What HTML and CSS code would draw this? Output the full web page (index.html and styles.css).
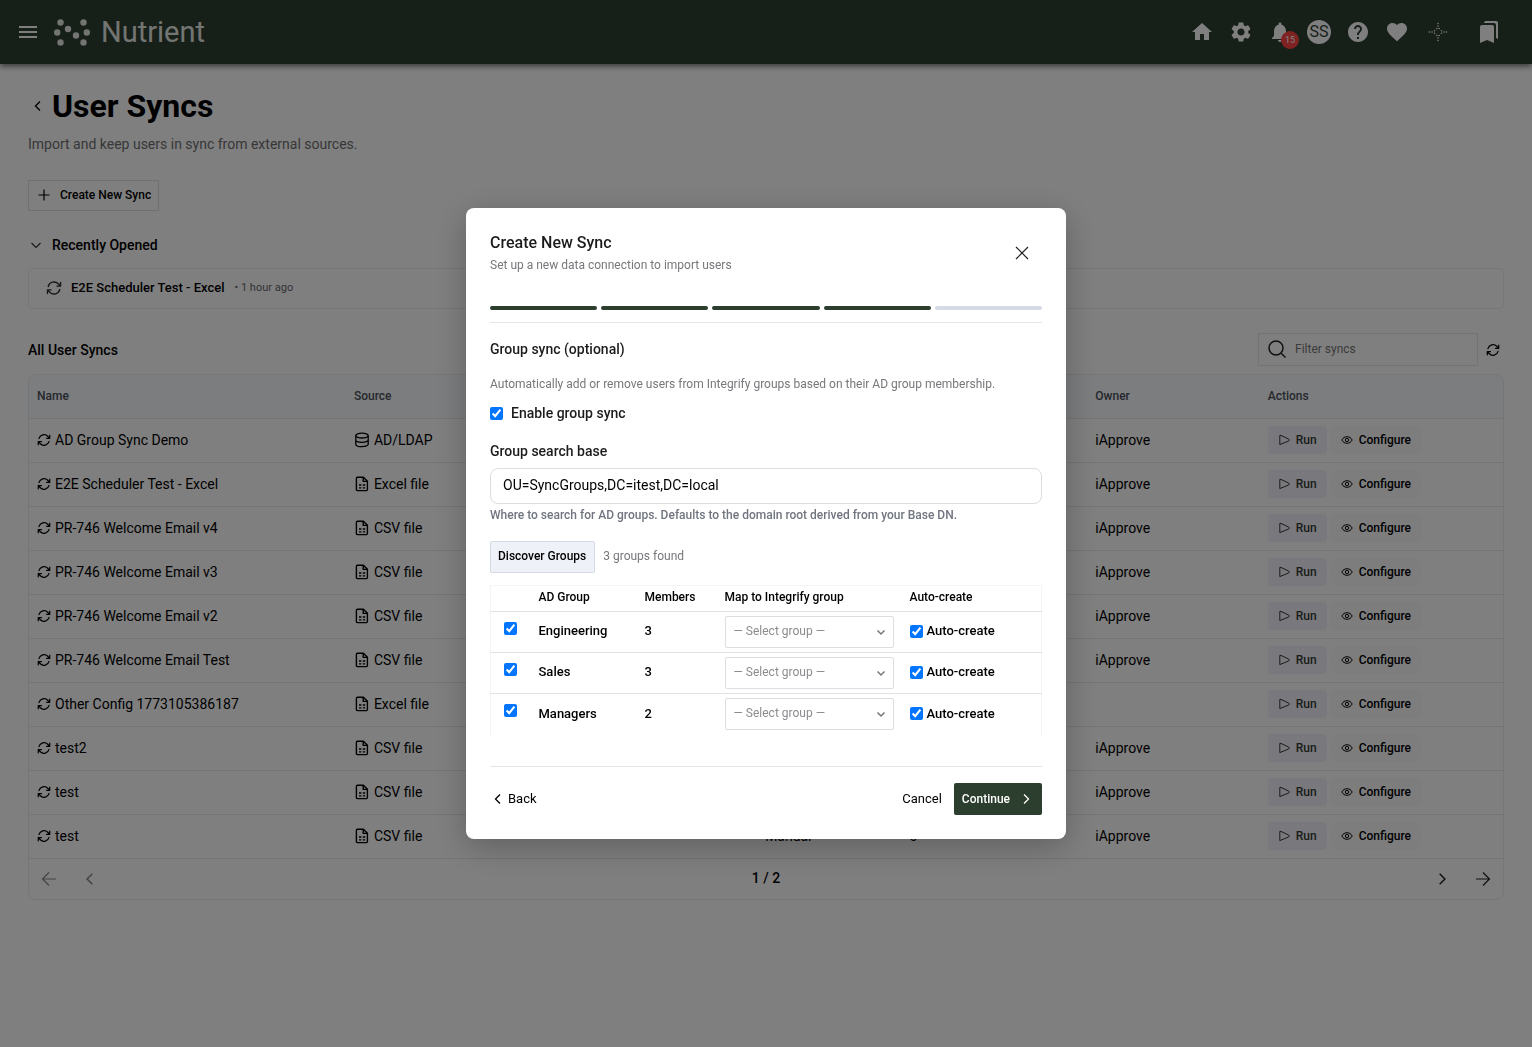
FILE: index.html
```html
<!DOCTYPE html>
<html lang="en">
<head>
<meta charset="utf-8">
<title>User Syncs</title>
<link rel="stylesheet" href="styles.css">
</head>
<body>
<svg class="sprite" aria-hidden="true">
  <symbol id="i-sync" viewBox="1 1 22 22"><path d="M16.023 9.348h4.992v-.001M2.985 19.644v-4.992m0 0h4.992m-4.993 0 3.181 3.183a8.250 8.250 0 0 0 13.803-3.700M4.031 9.865a8.250 8.250 0 0 1 13.803-3.700l3.181 3.182m0-4.991v4.990" fill="none" stroke="currentColor" stroke-width="1.900" stroke-linecap="round" stroke-linejoin="round"/></symbol>
  <symbol id="i-file" viewBox="0 0 16 16"><g fill="none" stroke="currentColor" stroke-width="1.4" stroke-linejoin="round"><path d="M3.4 1.2h6l4 4v8.4a1 1 0 0 1-1 1h-9a1 1 0 0 1-1-1V2.2a1 1 0 0 1 1-1z"/><path d="M9.2 1.4v4h4"/><path d="M5 9h2.4M8.8 9h2.4M5 11.8h2.4M8.8 11.8h2.4" stroke-width="1.3"/></g></symbol>
  <symbol id="i-db" viewBox="0 0 16 16"><g fill="none" stroke="currentColor" stroke-width="1.3"><ellipse cx="8" cy="3.600" rx="6.200" ry="2.400"/><path d="M1.800 3.600v8.600c0 1.400 2.800 2.500 6.200 2.500s6.200-1.100 6.200-2.500V3.600M1.800 8c0 1.400 2.800 2.300 6.200 2.300s6.200-.9 6.200-2.300"/></g></symbol>
  <symbol id="i-play" viewBox="0 0 12 12"><path d="M1.8 1.4v9.2L10.6 7a1 1 0 0 0 0-1.9L3 1.4z" fill="none" stroke="currentColor" stroke-linejoin="round"/></symbol>
  <symbol id="i-eye" viewBox="0 0 12 12"><g fill="none" stroke="currentColor" stroke-width="1"><path d="M.8 6C2 3.8 3.800 2.700 6 2.700S10 3.800 11.200 6C10 8.200 8.200 9.300 6 9.300S2 8.200.8 6z"/><circle cx="6" cy="6" r="1.700"/></g></symbol>
  <symbol id="i-left" viewBox="0 0 12 12"><path d="M8 1.500 3.500 6 8 10.500" fill="none" stroke="currentColor" stroke-width="1.300"/></symbol>
  <symbol id="i-right" viewBox="0 0 12 12"><path d="M4 1.500 8.500 6 4 10.500" fill="none" stroke="currentColor" stroke-width="1.300"/></symbol>
  <symbol id="i-down" viewBox="0 0 12 12"><path d="M1.500 4 6 8.500 10.500 4" fill="none" stroke="currentColor" stroke-width="1.200"/></symbol>
  <symbol id="i-caret" viewBox="0 0 12 12"><path d="M2.500 4.500 6 8l3.500-3.500" fill="none" stroke="currentColor" stroke-width="1.500"/></symbol>
</svg>

<header class="topbar">
  <button class="icon-btn" aria-label="Menu"><svg width="18" height="12" viewBox="0 0 18 12"><path d="M0 0h18v2H0zM0 5h18v2H0zM0 10h18v2H0z" fill="currentColor"/></svg></button>
  <a class="brand" href="#">
    <svg width="36" height="27" viewBox="0 0 36 27" aria-hidden="true"><g fill="currentColor"><circle cx="6.500" cy="3.500" r="3.200"/><circle cx="29.500" cy="3.500" r="3.200"/><circle cx="14" cy="10" r="3.200"/><circle cx="3.200" cy="13.500" r="3.200"/><circle cx="32.800" cy="13.500" r="3.200"/><circle cx="22" cy="16.500" r="3.200"/><circle cx="6.500" cy="23.500" r="3.200"/><circle cx="29.500" cy="23.500" r="3.200"/></g></svg>
    <span>Nutrient</span>
  </a>
  <nav class="tools">
    <button class="icon-btn" aria-label="Home"><svg width="24" height="24" viewBox="0 0 24 24"><path fill="currentColor" d="M10 20v-6h4v6h5v-8h3L12 3 2 12h3v8z"/></svg></button>
    <button class="icon-btn" aria-label="Settings"><svg width="24" height="24" viewBox="0 0 24 24"><path fill="currentColor" d="M19.140 12.940c.04-.3.06-.61.06-.94 0-.32-.02-.64-.07-.94l2.030-1.580c.18-.14.23-.41.12-.61l-1.920-3.320c-.12-.22-.37-.29-.59-.22l-2.390.96c-.5-.38-1.030-.7-1.620-.94l-.36-2.540c-.04-.24-.24-.41-.48-.41h-3.840c-.24 0-.43.17-.47.41l-.36 2.540c-.59.24-1.130.57-1.620.94l-2.390-.96c-.22-.08-.47 0-.59.22L2.740 8.870c-.12.21-.08.47.12.61l2.030 1.580c-.05.3-.09.63-.09.94s.02.64.07.94l-2.030 1.580c-.18.14-.23.41-.12.61l1.920 3.320c.12.22.37.29.59.22l2.390-.96c.5.38 1.030.7 1.620.94l.36 2.540c.05.24.24.41.48.41h3.840c.24 0 .44-.17.47-.41l.36-2.540c.59-.24 1.130-.56 1.620-.94l2.390.96c.22.08.47 0 .59-.22l1.920-3.320c.12-.22.07-.47-.12-.61zM12 15.600c-1.980 0-3.600-1.620-3.600-3.600s1.620-3.600 3.600-3.600 3.600 1.620 3.600 3.600-1.620 3.600-3.600 3.600"/></svg></button>
    <button class="icon-btn bell" aria-label="Notifications"><svg width="24" height="24" viewBox="0 0 24 24"><path fill="currentColor" d="M12 22c1.100 0 2-.9 2-2h-4c0 1.100.89 2 2 2m6-6v-5c0-3.070-1.640-5.640-4.500-6.320V4c0-.83-.67-1.500-1.500-1.500s-1.500.67-1.500 1.500v.68C7.630 5.360 6 7.920 6 11v5l-2 2v1h16v-1z"/></svg><span class="badge">15</span></button>
    <button class="avatar" aria-label="Account">SS</button>
    <button class="icon-btn" aria-label="Help"><svg width="24" height="24" viewBox="0 0 24 24"><path fill="currentColor" d="M12 2C6.480 2 2 6.480 2 12s4.480 10 10 10 10-4.480 10-10S17.520 2 12 2m1 17h-2v-2h2zm2.070-7.750-.9.920C13.450 12.900 13 13.500 13 15h-2v-.5c0-1.100.45-2.100 1.170-2.830l1.240-1.260c.37-.36.59-.86.59-1.410 0-1.100-.9-2-2-2s-2 .9-2 2H8c0-2.210 1.790-4 4-4s4 1.790 4 4c0 .88-.36 1.680-.93 2.250"/></svg></button>
    <button class="icon-btn" aria-label="Favorites"><svg width="24" height="24" viewBox="0 0 24 24"><path fill="currentColor" d="m12 21.350-1.450-1.320C5.400 15.360 2 12.280 2 8.500 2 5.420 4.420 3 7.500 3c1.740 0 3.410.81 4.500 2.090C13.090 3.810 14.760 3 16.500 3 19.580 3 22 5.420 22 8.500c0 3.780-3.400 6.860-8.550 11.540z"/></svg></button>
    <button class="icon-btn sparkle" aria-label="Assistant"><svg width="20" height="20" viewBox="0 0 20 20"><g fill="none" stroke="currentColor" stroke-width="1.600" stroke-linecap="round"><path d="M10 1.500h.01M10 4h.01M10 16h.01M10 18.500h.01M1.500 10h.01M4 10h.01M16 10h.01M18.500 10h.01"/><path d="M8.800 6.500h.01M11.200 6.500h.01M8.800 13.500h.01M11.200 13.500h.01M6.500 8.800h.01M6.500 11.200h.01M13.500 8.800h.01M13.500 11.200h.01"/></g></svg></button>
    <button class="icon-btn shelf" aria-label="Bookmarks"><svg width="24" height="24" viewBox="0 0 24 24"><path fill="currentColor" d="m19 18 2 1V3c0-1.100-.9-2-2-2H8.990C7.890 1 7 1.900 7 3h10c1.100 0 2 .9 2 2zM15 5H5c-1.100 0-2 .9-2 2v16l7-3 7 3V7c0-1.100-.9-2-2-2"/></svg></button>
  </nav>
</header>

<main class="page">
  <div class="heading">
    <a href="#" aria-label="Back"><svg class="s12"><use href="#i-left"/></svg></a>
    <h1>User Syncs</h1>
  </div>
  <p class="lead">Import and keep users in sync from external sources.</p>
  <button class="create"><svg width="12" height="12" viewBox="0 0 12 12"><path d="M6 .5v11M.5 6h11" stroke="currentColor" stroke-width="1.200"/></svg>Create New Sync</button>

  <h2 class="recent-title"><svg class="s12"><use href="#i-down"/></svg>Recently Opened</h2>
  <a class="recent" href="#"><svg class="s16"><use href="#i-sync"/></svg><strong>E2E Scheduler Test - Excel</strong><span>• 1 hour ago</span></a>

  <div class="toolbar">
    <h2>All User Syncs</h2>
    <label class="filter"><svg width="20" height="20" viewBox="0 0 20 20"><g fill="none" stroke="currentColor" stroke-width="1.500"><circle cx="9" cy="9" r="7"/><path d="m14 14 4.500 4.500"/></g></svg><input type="text" placeholder="Filter syncs" aria-label="Filter syncs"></label>
    <button class="icon-btn" aria-label="Refresh"><svg class="s14"><use href="#i-sync"/></svg></button>
  </div>

  <div class="panel">
    <table class="syncs">
      <colgroup><col class="c-name"><col class="c-source"><col class="c-mode"><col class="c-count"><col class="c-owner"><col></colgroup>
      <thead><tr><th>Name</th><th>Source</th><th></th><th></th><th>Owner</th><th>Actions</th></tr></thead>
      <tbody>
        <tr><td><span class="cell"><svg class="s14"><use href="#i-sync"/></svg>AD Group Sync Demo</span></td><td><span class="cell"><svg class="s16"><use href="#i-db"/></svg>AD/LDAP</span></td><td></td><td></td><td>iApprove</td><td><span class="acts"><button class="run"><svg class="s12"><use href="#i-play"/></svg>Run</button><button class="conf"><svg class="s12"><use href="#i-eye"/></svg>Configure</button></span></td></tr>
        <tr><td><span class="cell"><svg class="s14"><use href="#i-sync"/></svg>E2E Scheduler Test - Excel</span></td><td><span class="cell"><svg class="s16"><use href="#i-file"/></svg>Excel file</span></td><td></td><td></td><td>iApprove</td><td><span class="acts"><button class="run"><svg class="s12"><use href="#i-play"/></svg>Run</button><button class="conf"><svg class="s12"><use href="#i-eye"/></svg>Configure</button></span></td></tr>
        <tr><td><span class="cell"><svg class="s14"><use href="#i-sync"/></svg>PR-746 Welcome Email v4</span></td><td><span class="cell"><svg class="s16"><use href="#i-file"/></svg>CSV file</span></td><td></td><td></td><td>iApprove</td><td><span class="acts"><button class="run"><svg class="s12"><use href="#i-play"/></svg>Run</button><button class="conf"><svg class="s12"><use href="#i-eye"/></svg>Configure</button></span></td></tr>
        <tr><td><span class="cell"><svg class="s14"><use href="#i-sync"/></svg>PR-746 Welcome Email v3</span></td><td><span class="cell"><svg class="s16"><use href="#i-file"/></svg>CSV file</span></td><td></td><td></td><td>iApprove</td><td><span class="acts"><button class="run"><svg class="s12"><use href="#i-play"/></svg>Run</button><button class="conf"><svg class="s12"><use href="#i-eye"/></svg>Configure</button></span></td></tr>
        <tr><td><span class="cell"><svg class="s14"><use href="#i-sync"/></svg>PR-746 Welcome Email v2</span></td><td><span class="cell"><svg class="s16"><use href="#i-file"/></svg>CSV file</span></td><td></td><td></td><td>iApprove</td><td><span class="acts"><button class="run"><svg class="s12"><use href="#i-play"/></svg>Run</button><button class="conf"><svg class="s12"><use href="#i-eye"/></svg>Configure</button></span></td></tr>
        <tr><td><span class="cell"><svg class="s14"><use href="#i-sync"/></svg>PR-746 Welcome Email Test</span></td><td><span class="cell"><svg class="s16"><use href="#i-file"/></svg>CSV file</span></td><td></td><td></td><td>iApprove</td><td><span class="acts"><button class="run"><svg class="s12"><use href="#i-play"/></svg>Run</button><button class="conf"><svg class="s12"><use href="#i-eye"/></svg>Configure</button></span></td></tr>
        <tr><td><span class="cell"><svg class="s14"><use href="#i-sync"/></svg>Other Config 1773105386187</span></td><td><span class="cell"><svg class="s16"><use href="#i-file"/></svg>Excel file</span></td><td></td><td></td><td></td><td><span class="acts"><button class="run"><svg class="s12"><use href="#i-play"/></svg>Run</button><button class="conf"><svg class="s12"><use href="#i-eye"/></svg>Configure</button></span></td></tr>
        <tr><td><span class="cell"><svg class="s14"><use href="#i-sync"/></svg>test2</span></td><td><span class="cell"><svg class="s16"><use href="#i-file"/></svg>CSV file</span></td><td></td><td></td><td>iApprove</td><td><span class="acts"><button class="run"><svg class="s12"><use href="#i-play"/></svg>Run</button><button class="conf"><svg class="s12"><use href="#i-eye"/></svg>Configure</button></span></td></tr>
        <tr><td><span class="cell"><svg class="s14"><use href="#i-sync"/></svg>test</span></td><td><span class="cell"><svg class="s16"><use href="#i-file"/></svg>CSV file</span></td><td></td><td></td><td>iApprove</td><td><span class="acts"><button class="run"><svg class="s12"><use href="#i-play"/></svg>Run</button><button class="conf"><svg class="s12"><use href="#i-eye"/></svg>Configure</button></span></td></tr>
        <tr><td><span class="cell"><svg class="s14"><use href="#i-sync"/></svg>test</span></td><td><span class="cell"><svg class="s16"><use href="#i-file"/></svg>CSV file</span></td><td>Manual</td><td>0</td><td>iApprove</td><td><span class="acts"><button class="run"><svg class="s12"><use href="#i-play"/></svg>Run</button><button class="conf"><svg class="s12"><use href="#i-eye"/></svg>Configure</button></span></td></tr>
      </tbody>
    </table>
    <div class="pager">
      <div class="pager-nav off"><button class="icon-btn" aria-label="First page" disabled><svg width="16" height="16" viewBox="0 0 16 16"><path d="M15 8H1.500M8 1.500 1.500 8 8 14.500" fill="none" stroke="currentColor" stroke-width="1.200"/></svg></button><button class="icon-btn" aria-label="Previous page" disabled><svg class="s14"><use href="#i-left"/></svg></button></div>
      <span>1 / 2</span>
      <div class="pager-nav end"><button class="icon-btn" aria-label="Next page"><svg class="s14"><use href="#i-right"/></svg></button><button class="icon-btn" aria-label="Last page"><svg width="16" height="16" viewBox="0 0 16 16"><path d="M1 8h13.500M8 1.500 14.500 8 8 14.500" fill="none" stroke="currentColor" stroke-width="1.200"/></svg></button></div>
    </div>
  </div>
</main>

<div class="backdrop">
  <section class="dialog" role="dialog" aria-modal="true" aria-labelledby="dlg-title">
    <div class="dialog-head">
      <div><h2 id="dlg-title">Create New Sync</h2><p>Set up a new data connection to import users</p></div>
      <button class="icon-btn close" aria-label="Close"><svg width="14" height="14" viewBox="0 0 14 14"><path d="m1 1 12 12M13 1 1 13" stroke="currentColor" stroke-width="1.200"/></svg></button>
    </div>
    <div class="steps"><i class="done"></i><i class="done"></i><i class="done"></i><i class="done"></i><i></i></div>
    <h3>Group sync (optional)</h3>
    <p class="note">Automatically add or remove users from Integrify groups based on their AD group membership.</p>
    <label class="enable"><input type="checkbox" checked>Enable group sync</label>
    <label class="field-label" for="base">Group search base</label>
    <input class="field" id="base" type="text" value="OU=SyncGroups,DC=itest,DC=local">
    <p class="help">Where to search for AD groups. Defaults to the domain root derived from your Base DN.</p>
    <div class="discover"><button>Discover Groups</button><span>3 groups found</span></div>
    <table class="groups">
      <colgroup><col class="g-check"><col class="g-name"><col class="g-members"><col class="g-map"><col></colgroup>
      <thead><tr><th></th><th>AD Group</th><th>Members</th><th>Map to Integrify group</th><th>Auto-create</th></tr></thead>
      <tbody>
        <tr><td class="pick"><input type="checkbox" checked aria-label="Engineering"></td><td>Engineering</td><td>3</td><td class="map"><div class="select"><select aria-label="Group for Engineering"><option>— Select group —</option></select><svg class="s12"><use href="#i-caret"/></svg></div></td><td><label class="auto"><input type="checkbox" checked>Auto-create</label></td></tr>
        <tr><td class="pick"><input type="checkbox" checked aria-label="Sales"></td><td>Sales</td><td>3</td><td class="map"><div class="select"><select aria-label="Group for Sales"><option>— Select group —</option></select><svg class="s12"><use href="#i-caret"/></svg></div></td><td><label class="auto"><input type="checkbox" checked>Auto-create</label></td></tr>
        <tr><td class="pick"><input type="checkbox" checked aria-label="Managers"></td><td>Managers</td><td>2</td><td class="map"><div class="select"><select aria-label="Group for Managers"><option>— Select group —</option></select><svg class="s12"><use href="#i-caret"/></svg></div></td><td><label class="auto"><input type="checkbox" checked>Auto-create</label></td></tr>
      </tbody>
    </table>
    <div class="dialog-foot">
      <button class="plain"><svg class="s12"><use href="#i-left"/></svg>Back</button>
      <button class="plain cancel">Cancel</button>
      <button class="primary">Continue<svg class="s12"><use href="#i-right"/></svg></button>
    </div>
  </section>
</div>
</body>
</html>
```
FILE: styles.css
```css
* { box-sizing: border-box; }
body { margin: 0; min-height: 100vh; background: #fff; color: #000; font: 14px/20px Roboto, "Liberation Sans", sans-serif; }
h1, h2, h3, p { margin: 0; }
h2, h3 { font-size: 14px; font-weight: 500; line-height: 20px; }
button { font: inherit; color: inherit; border: 0; background: none; padding: 0; }
a { color: inherit; text-decoration: none; }
svg { flex: none; display: block; }
.sprite { position: absolute; width: 0; height: 0; }
.s12 { width: 12px; height: 12px; }
.s14 { width: 14px; height: 14px; }
.s16 { width: 16px; height: 16px; }
.icon-btn { display: flex; align-items: center; justify-content: center; }

.topbar { display: flex; align-items: center; height: 64px; padding: 0 31px 0 19px; background: #2e3e32; color: #fff; box-shadow: 0 2px 6px rgba(0, 0, 0, .6); }
.brand { display: flex; align-items: center; gap: 11px; margin-left: 17px; color: #e6ebe6; font-size: 29px; line-height: 32px; }
.tools { display: flex; align-items: center; gap: 15px; margin-left: auto; }
.bell { position: relative; }
.badge { position: absolute; left: 13px; top: 11px; width: 18px; height: 18px; border-radius: 9px; background: #f44; font-size: 9px; line-height: 18px; text-align: center; }
.avatar { width: 24px; height: 24px; border-radius: 50%; background: #fff; color: #2e3e32; font-size: 16px; line-height: 24px; }
.sparkle { margin-left: 4px; }
.shelf { margin-left: 14px; }

.page { padding: 24px 28px 32px; }
.heading { display: flex; align-items: center; gap: 8px; padding-left: 4px; }
h1 { font-size: 32px; font-weight: 700; line-height: 36px; }
.lead { margin-top: 10px; color: #6f6f73; }
.create { display: flex; align-items: center; gap: 10px; height: 31px; margin-top: 26px; padding: 0 7px 1px 9px; border: 1px solid #dfe1e3; font-size: 12px; font-weight: 500; }
.recent-title { display: flex; align-items: center; gap: 10px; margin-top: 24px; padding-left: 2px; }
.recent-title svg { color: #333; }
.recent { display: flex; align-items: center; height: 41px; margin-top: 13px; padding: 0 17px 2px; border: 1px solid #eceef0; border-radius: 4px; }
.recent svg { color: #333; }
.recent strong { margin-left: 9px; font-size: 13px; font-weight: 500; }
.recent span { margin-left: 10px; color: #67676b; font-size: 11px; }
.toolbar { display: flex; align-items: center; gap: 8px; margin-top: 24px; padding-right: 4px; }
.toolbar h2 { margin-right: auto; }
.toolbar .icon-btn { width: 14px; }
.filter { display: flex; align-items: center; gap: 8px; width: 220px; height: 33px; padding: 0 8px 2px; border: 1px solid #e6e6e6; }
.filter svg { color: #222; }
.filter input { flex: 1; min-width: 0; border: 0; padding: 0; background: none; font: 12px/16px Roboto, sans-serif; }
.filter input::placeholder { color: #777; }

.panel { margin-top: 8px; border: 1px solid #eaecee; border-radius: 8px; overflow: hidden; }
.syncs { width: 100%; border-collapse: collapse; table-layout: fixed; }
.c-name { width: 21.5%; }
.c-source { width: 27.9%; }
.c-mode { width: 9.8%; }
.c-count { width: 12.6%; }
.c-owner { width: 11.7%; }
.syncs th, .syncs td { height: 44px; padding: 0 8px; border-bottom: 1px solid #e6e8ea; text-align: left; }
.syncs td { padding-bottom: 1px; }
.syncs th { height: 43px; background: #f9fbfc; color: #4a525c; font-size: 12px; font-weight: 500; }
.cell { display: flex; align-items: center; gap: 4px; }
.acts { display: flex; gap: 4px; }
.acts button { display: flex; align-items: center; gap: 6px; height: 28px; padding: 0 10px; border-radius: 4px; font-size: 12px; font-weight: 500; }
.acts .run { background: #f2f0f9; color: #333a36; }
.acts .conf { background: #fbfbfd; }
.pager { display: grid; grid-template-columns: 1fr auto 1fr; align-items: center; height: 40px; padding: 0 12px; font-weight: 500; }
.pager span { padding-bottom: 2px; }
.pager-nav { display: flex; gap: 26px; }
.pager-nav.off { color: #888; }
.pager-nav.end { justify-content: flex-end; color: #222; }

.backdrop { position: fixed; inset: 0; display: grid; place-items: center; overflow: auto; background: rgba(0, 0, 0, .5); }
.dialog { width: 100%; max-width: 600px; padding: 24px; border-radius: 8px; background: #fff; box-shadow: 0 8px 32px rgba(0, 0, 0, .25); }
.dialog-head { display: flex; justify-content: space-between; align-items: center; }
.dialog-head h2 { color: #1c1c1e; font-size: 16px; line-height: 22px; }
.dialog-head p { margin-top: 2px; color: #77777c; font-size: 12px; line-height: 18px; }
.close { width: 40px; height: 40px; color: #222; }
.steps { display: flex; gap: 4px; margin-top: 32px; padding-bottom: 12px; border-bottom: 1px solid #e3e5e8; }
.steps i { flex: 1; height: 4px; border-radius: 2px; background: #d5dae5; }
.steps .done { background: #2c3e2e; }
.dialog h3 { margin-top: 16px; color: #1c1c1e; }
.note { margin-top: 16px; color: #77777c; font-size: 12px; line-height: 18px; }
.dialog input[type="checkbox"] { margin: 0; accent-color: #0075ff; }
.enable { display: flex; align-items: center; gap: 8px; margin-top: 10px; color: #1c1c1e; font-weight: 500; }
.field-label { display: block; margin-top: 18px; color: #1c1c1e; font-weight: 500; }
.field { display: block; width: 100%; height: 36px; margin-top: 7px; padding: 0 12px 2px; border: 1px solid #dcdde0; border-radius: 8px; font: 14px/20px Roboto, sans-serif; }
.help { margin-top: 2px; color: #707580; font-size: 12px; font-weight: 500; line-height: 18px; }
.discover { display: flex; align-items: center; gap: 8px; margin-top: 17px; color: #77777c; font-size: 12px; }
.discover button { height: 32px; padding: 0 8px 2px 7px; border: 1px solid #d5d9e2; border-radius: 2px; background: #eff1f8; color: #000; font-weight: 500; }
.discover span { padding-bottom: 2px; }
.groups { width: 100%; margin-top: 12px; border-collapse: collapse; table-layout: fixed; border: 1px solid #f4f4f5; border-bottom: 0; }
.g-check { width: 40px; }
.g-name { width: 106px; }
.g-members { width: 80px; }
.g-map { width: 185px; }
.groups th, .groups td { padding: 0 8px; text-align: left; font-weight: 500; }
.groups th { height: 26px; padding-bottom: 3px; font-size: 12px; line-height: 16px; }
.groups td { height: 41px; padding-bottom: 2px; border-top: 1px solid #dfe2e5; font-size: 13px; }
.groups .map { padding-bottom: 1px; }
.groups .pick { padding: 10px 13px; vertical-align: top; }
.pick input { display: block; }
.select { position: relative; }
.select select { display: block; width: 100%; height: 32px; padding: 0 8px 2px; appearance: none; border: 1px solid #dcdee2; border-radius: 2px; background: #fff; color: #8c8c90; font: 12px/16px Roboto, sans-serif; }
.select svg { position: absolute; right: 7px; top: 10px; color: #777; pointer-events: none; }
.auto { display: flex; align-items: center; gap: 4px; }
.dialog-foot { display: flex; align-items: center; margin-top: 31px; padding-top: 16px; border-top: 1px solid #e3e5e8; }
.plain { display: flex; align-items: center; gap: 4px; padding-left: 2px; font-size: 13px; }
.cancel { margin: 0 12px 0 auto; }
.primary { display: flex; align-items: center; gap: 10px; height: 32px; padding: 0 10px 0 8px; border-radius: 2px; background: #2c3e2e; color: #fff; font-size: 12px; font-weight: 500; }
```
